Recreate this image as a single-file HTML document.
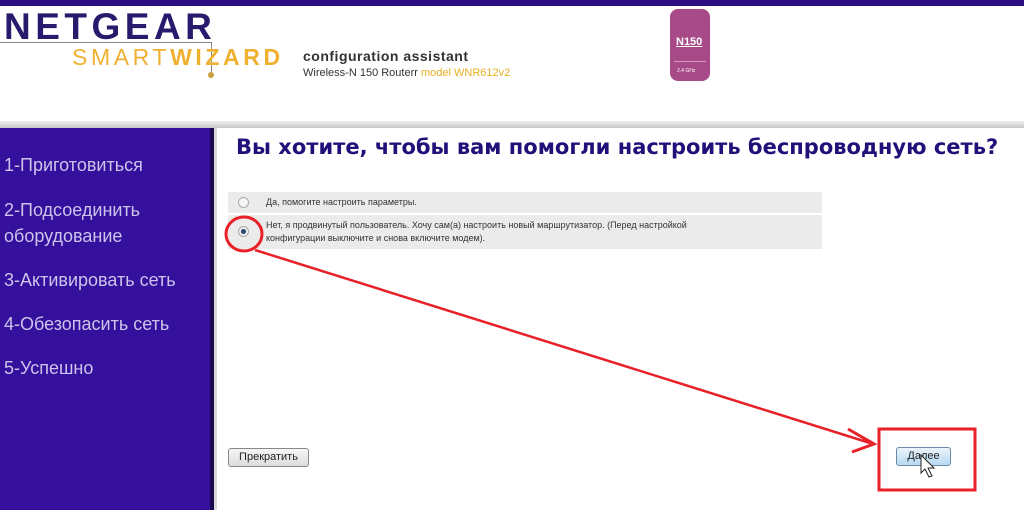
<!DOCTYPE html>
<html><head><meta charset="utf-8"><style>
*{margin:0;padding:0;box-sizing:border-box}
body{width:1024px;height:510px;overflow:hidden;background:#fff;font-family:"Liberation Sans",sans-serif;position:relative}
.top{position:absolute;left:0;top:0;width:1024px;height:6px;background:#2a0d80}
.hdrline{position:absolute;left:0;top:121px;width:1024px;height:7px;background:linear-gradient(#f0f0f0,#c8c8c8)}
.side{position:absolute;left:0;top:128px;width:210px;height:382px;background:#34109c}
.sb{position:absolute;left:210px;top:128px;width:4px;height:382px;background:#1a0850}
.sb2{position:absolute;left:214px;top:128px;width:3px;height:382px;background:#d8d8d8}
.side div{position:absolute;left:4px;color:#cdc4ec;font-size:18px;line-height:26px}
.ng{position:absolute;left:4px;top:6px;font-size:37px;font-weight:bold;color:#2a1a6e;letter-spacing:4.5px}
.sw{position:absolute;left:72px;top:44px;font-size:23px;color:#f0b030;letter-spacing:3.6px}
.ca{position:absolute;left:303px;top:48px;font-size:14px;font-weight:bold;color:#333;letter-spacing:.5px}
.wr{position:absolute;left:303px;top:67px;font-size:11px;color:#333}
.wr span{color:#e8b020}
.badge{position:absolute;left:670px;top:9px;width:40px;height:72px;border-radius:8px;background:#a84a88}
h1{position:absolute;left:236px;top:135px;font-family:"DejaVu Sans",sans-serif;font-size:21px;color:#22107a;font-weight:bold;white-space:nowrap}
.opt{position:absolute;left:228px;width:594px;background:#ebebeb;font-size:9px;color:#333}
.rad{position:absolute;left:10px;width:11px;height:11px;border-radius:50%;border:1px solid #aaa;background:#f6f6f6}
.btn{position:absolute;font-size:11px;color:#222;border:1px solid #888;border-radius:3px;background:linear-gradient(#f6f6f6,#dcdcdc);text-align:center}
</style></head><body>
<div class="top"></div>
<div class="ng">NETGEAR</div>
<div style="position:absolute;left:0;top:42px;width:212px;height:1px;background:#888"></div>
<div style="position:absolute;left:211px;top:42px;width:1px;height:32px;background:#888"></div>
<div style="position:absolute;left:208px;top:72px;width:6px;height:6px;border-radius:50%;background:#c8a040"></div>
<div class="sw">SMART<b>WIZARD</b></div>
<div class="ca">configuration assistant</div>
<div class="wr">Wireless-N 150 Routerr <span>model WNR612v2</span></div>
<div class="badge"><div style="position:absolute;left:6px;top:27px;color:#fff;font-size:11px;font-weight:bold;text-decoration:underline">N150</div><div style="position:absolute;left:4px;top:52px;width:32px;height:1px;background:#d89ac0"></div><div style="position:absolute;left:7px;top:59px;color:#fff;font-size:5px">2.4 GHz</div></div>
<div class="hdrline"></div>
<div class="side">
<div style="top:24px">1-Приготовиться</div>
<div style="top:69px">2-Подсоединить<br>оборудование</div>
<div style="top:139px">3-Активировать сеть</div>
<div style="top:183px">4-Обезопасить сеть</div>
<div style="top:227px">5-Успешно</div>
</div>
<div class="sb"></div><div class="sb2"></div>
<h1>Вы хотите, чтобы вам помогли настроить беспроводную сеть?</h1>
<div class="opt" style="top:192px;height:21px"><div class="rad" style="top:5px"></div><div style="position:absolute;left:38px;top:5px">Да, помогите настроить параметры.</div></div>
<div class="opt" style="top:215px;height:34px"><div class="rad" style="top:11px;background:radial-gradient(#2a4a70 35%,#f0f0f0 45%)"></div><div style="position:absolute;left:38px;top:4px;line-height:13px">Нет, я продвинутый пользователь. Хочу сам(а) настроить новый маршрутизатор. (Перед настройкой<br>конфигурации выключите и снова включите модем).</div></div>
<div class="btn" style="left:228px;top:448px;width:81px;height:19px;line-height:17px">Прекратить</div>
<div class="btn" style="left:896px;top:447px;width:55px;height:19px;line-height:17px;background:linear-gradient(#eaf4fc,#b8daf2);border-color:#6a8aa8">Далее</div>
<svg width="1024" height="510" style="position:absolute;left:0;top:0">
<ellipse cx="244" cy="234" rx="18" ry="17" fill="none" stroke="#e82028" stroke-width="3"/>
<line x1="255" y1="250" x2="870" y2="443" stroke="#e82028" stroke-width="2.5"/>
<polyline points="848,429 874,444 852,452" fill="none" stroke="#e82028" stroke-width="3"/>
<rect x="879" y="429" width="96" height="61" fill="none" stroke="#e82028" stroke-width="3"/>
<path d="M921 455 L921 473 L925 469 L929 477 L932 476 L928 468 L934 468 Z" fill="#fff" stroke="#222" stroke-width="1"/>
</svg>
</body></html>
